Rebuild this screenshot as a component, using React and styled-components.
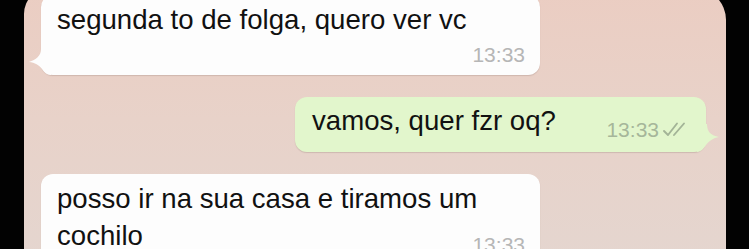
import React from 'react';
import styled, { createGlobalStyle } from 'styled-components';

// Page reset
const GlobalStyle = createGlobalStyle`
    html, body {
        margin: 0;
        padding: 0;
        background: #000;
        overflow: hidden;
    }
`;

const Screen = styled.div`
    width: 749px;
    height: 249px;
    display: flex;
    background: #020202;
    overflow: hidden;
    font-family: "Liberation Sans", Arial, sans-serif;
`;

const Panel = styled.div`
    margin: -12px 0 0 24px;
    width: 702px;
    height: 290px;
    flex-shrink: 0;
    border-radius: 26px 32px 0 0;
    background: linear-gradient(180deg, #ebcdc2 0%, #e8d2c9 45%, #e4d6d0 100%);
    padding: 7px 20px 0 17px;
    box-sizing: border-box;

    display: flex;
    flex-direction: column;
    gap: 22px;
`;

const Bubble = styled.div`
    position: relative;
    width: ${p => p.width}px;
    box-sizing: border-box;
    align-self: ${p => (p.out ? 'flex-end' : 'flex-start')};
    background: ${p => (p.out ? '#e2f6cc' : '#fdfdfd')};
    border-radius: 12px;
    padding: ${p => (p.out ? '5px 16px 12px 17px' : '6px 15px 10px 16px')};
    box-shadow: 0 1px 1px rgba(120, 90, 80, 0.22);
    display: flow-root;
`;

const Message = styled.span`
    font-size: 27.6px;
    line-height: 37px;
    color: #111;
`;

const Meta = styled.span`
    display: ${p => (p.stacked ? 'block' : 'inline-flex')};
    float: ${p => (p.stacked ? 'none' : 'right')};
    align-items: center;
    gap: 3px;
    margin: ${p => (p.stacked ? '6px 0 0 0' : '17px 0 0 35px')};
    text-align: right;
    font-size: 21px;
    line-height: 21px;
    color: ${p => (p.out ? '#a6b69a' : '#b6b6b6')};
`;

const Tail = styled.svg`
    position: absolute;
    bottom: 0;
    ${p => (p.out ? 'right: -13px; transform: scaleX(-1);' : 'left: -12px;')}
    width: 22px;
    height: 28px;
`;

function Ticks() {
    return (
        <svg width="28" height="15" viewBox="0 0 28 15" fill="none"
             stroke="#a3b497" strokeWidth="1.9" strokeLinecap="round" strokeLinejoin="round">
            <path d="M2 9 L6 13 L15 1.5" />
            <path d="M12 13 L22 1.5" />
        </svg>
    );
}

function Bubbletail({ out }) {
    return (
        <Tail out={out} viewBox="0 0 22 28">
            <path
                d={out
                    ? 'M12 0 C12 8 8 11.5 0 13 C6 14 10 17 13 21 C15 24 18 28 22 28 L22 0 Z'
                    : 'M12 2 C12 9 7 12.5 0 15 C6 15.5 10 18 13 22 C15 25 18 28 22 28 L22 2 Z'}
                fill={out ? '#e2f6cc' : '#fdfdfd'}
            />
        </Tail>
    );
}

const messages = [
    { id: 1, text: 'segunda to de folga, quero ver vc', time: '13:33', width: 499, stacked: true, tail: true },
    { id: 2, text: 'vamos, quer fzr oq?', time: '13:33', width: 411, out: true, tail: true },
    { id: 3, text: 'posso ir na sua casa e tiramos um cochilo', time: '13:33', width: 499 },
];

export default function App() {
    return (
        <>
            <GlobalStyle />
            <Screen>
                <Panel>
                    {messages.map(m => (
                        <Bubble key={m.id} width={m.width} out={m.out}>
                            {m.tail && <Bubbletail out={m.out} />}
                            <Message>{m.text}</Message>
                            <Meta stacked={m.stacked} out={m.out}>
                                {m.time}
                                {m.out && <Ticks />}
                            </Meta>
                        </Bubble>
                    ))}
                </Panel>
            </Screen>
        </>
    );
}
